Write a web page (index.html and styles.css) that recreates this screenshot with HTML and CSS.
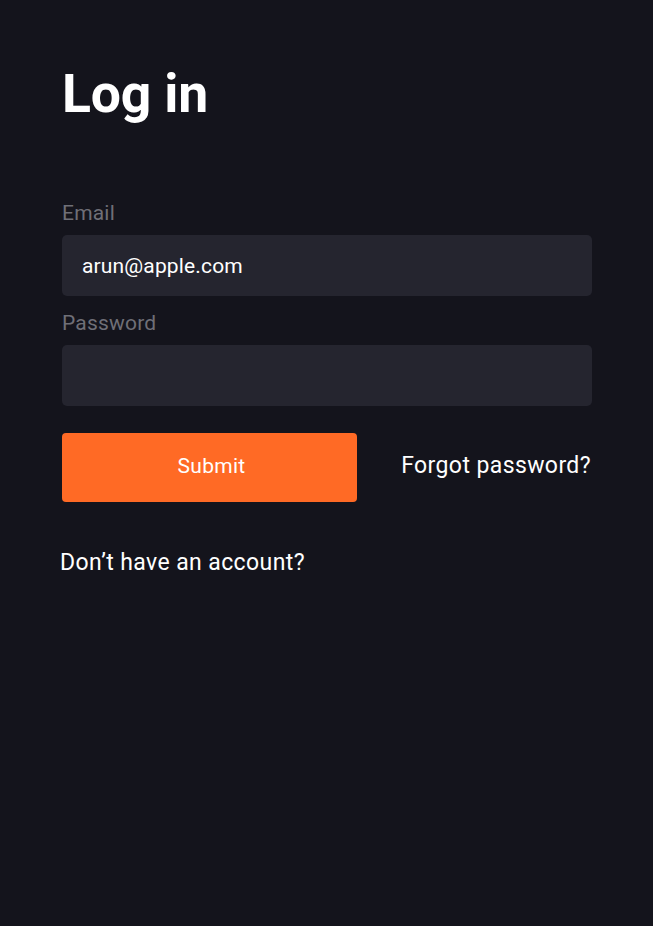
FILE: index.html
```html
<!DOCTYPE html>
<html lang="en">
<head>
<meta charset="utf-8">
<title>Log in</title>
<link rel="stylesheet" href="styles.css">
</head>
<body>
<main class="page">
  <h1 class="title">Log in</h1>
  <form class="form">
    <label class="field">
      <span class="field-label">Email</span>
      <span class="field-input">arun@apple.com</span>
    </label>
    <label class="field">
      <span class="field-label">Password</span>
      <span class="field-input"></span>
    </label>
    <div class="actions">
      <button type="button" class="submit">Submit</button>
      <a class="forgot">Forgot password?</a>
    </div>
  </form>
  <p class="signup">Don’t have an account?</p>
</main>
</body>
</html>
```

FILE: styles.css
```css
html, body {
  margin: 0;
  padding: 0;
  background: #14141c;
  height: 100%;
}
body {
  font-family: Roboto, "Liberation Sans", sans-serif;
  color: #ffffff;
}
.page {
  padding: 56px 61px 0 62px;
}
.title {
  margin: 0;
  font-size: 53.5px;
  font-weight: 700;
  line-height: 76px;
  letter-spacing: -0.2px;
}
.form {
  margin-top: 69px;
  display: flex;
  flex-direction: column;
}
.field {
  display: flex;
  flex-direction: column;
  margin-bottom: 15px;
}
.field-label {
  font-size: 21px;
  line-height: 25px;
  color: #6f6f77;
  margin-bottom: 9px;
  letter-spacing: 0.2px;
}
.field-input {
  height: 61px;
  box-sizing: border-box;
  background: #25252f;
  border-radius: 5px;
  padding: 0 20px;
  display: flex;
  align-items: center;
  font-size: 21px;
  letter-spacing: 0.15px;
  color: #ffffff;
}
.actions {
  margin-top: 12px;
  display: flex;
  align-items: center;
  justify-content: space-between;
}
.submit {
  width: 295px;
  height: 69px;
  border: none;
  border-radius: 4px;
  background: #ff6a25;
  color: #ffffff;
  font-family: Roboto, "Liberation Sans", sans-serif;
  font-size: 21px;
  letter-spacing: 0.3px;
  padding: 0 0 4px 4px;
}
.forgot {
  font-size: 23px;
  letter-spacing: 0.4px;
  color: #ffffff;
  margin: 0 1px 4px 0;
}
.signup {
  margin: 47px 0 0 -2px;
  font-size: 23px;
  letter-spacing: 0.4px;
  line-height: 27px;
}
```
